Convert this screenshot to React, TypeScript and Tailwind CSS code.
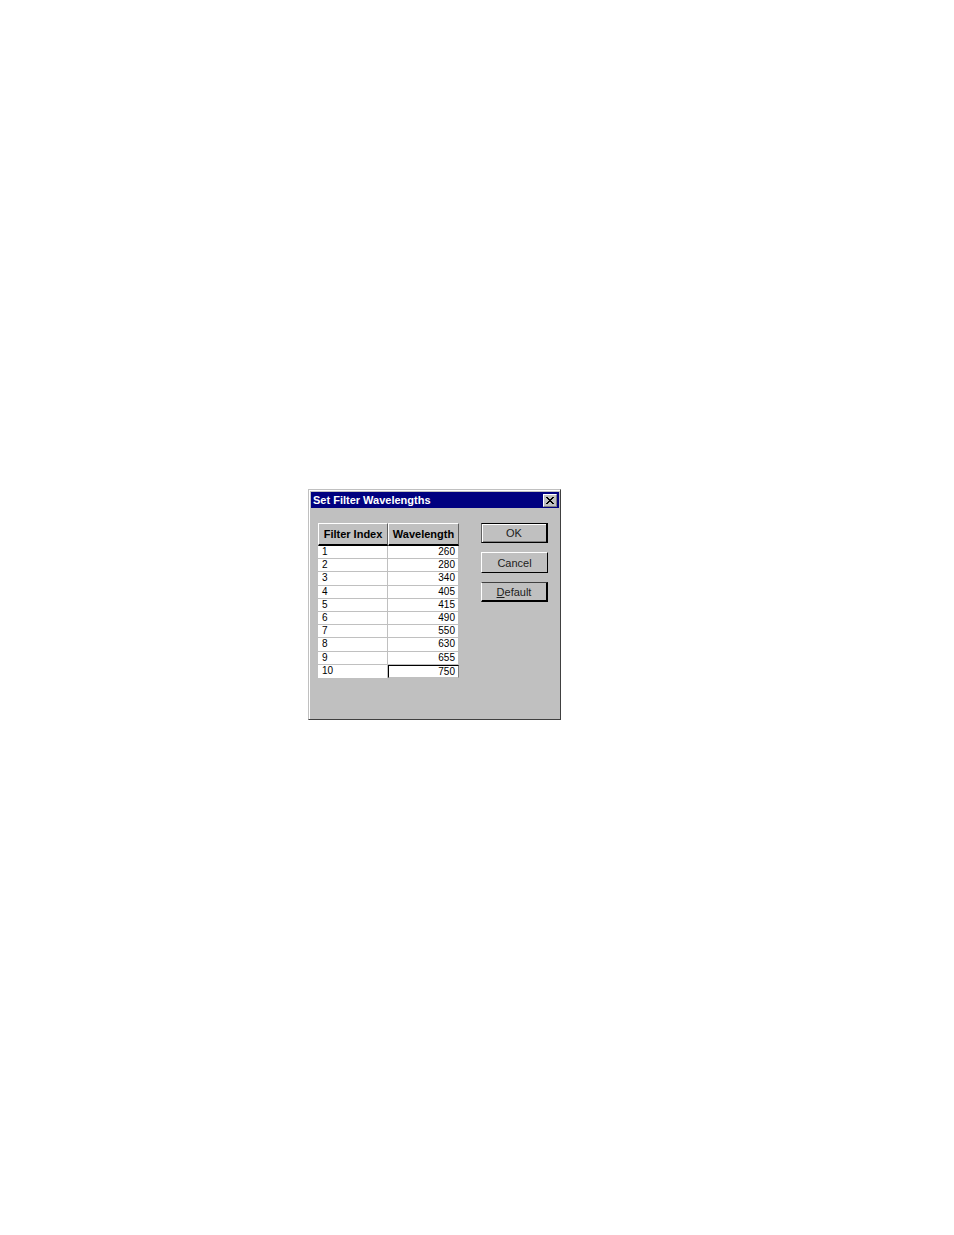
import React from 'react';

const filters = [260, 280, 340, 405, 415, 490, 550, 630, 655, 750];

const buttonBase =
  'w-full border-r-black border-b-black bg-[#c0c0c0] text-center text-[11px] leading-[16px] text-[#202020]';

const headerCell =
  'h-[23px] border-t border-l border-r border-b-2 border-t-white border-l-white border-r-[#606060] border-b-black bg-[#c0c0c0] p-0 text-center text-[11px] leading-[18px] font-bold';

export default function App() {
  return (
    <main className="min-h-screen bg-white pt-[489px] pl-[308px] font-['Liberation_Sans',Arial,sans-serif] text-black">
      <section
        role="dialog"
        aria-labelledby="dialog-title"
        className="w-[253px] border border-t-[#c0c0c0] border-l-[#c0c0c0] border-r-[#404040] border-b-[#404040] bg-[#c0c0c0]"
      >
        <div className="border-t border-l border-white px-px pt-px pb-[41px]">
          {/* Title bar */}
          <header className="flex h-[16px] items-center justify-between bg-[#000080] pr-[2px] pl-[2px]">
            <h1 id="dialog-title" className="text-[11px] leading-[16px] font-bold whitespace-nowrap text-white">
              Set Filter Wavelengths
            </h1>
            <button
              type="button"
              aria-label="Close"
              className="flex h-[13px] w-[14px] items-center justify-center border border-t-white border-l-white border-r-[#808080] border-b-[#808080] bg-[#c0c0c0]"
            >
              <svg width="8" height="7" viewBox="0 0 8 7" fill="black" shapeRendering="crispEdges" aria-hidden="true">
                <path d="M0 0h2v1h1v1h2v-1h1v-1h2v1h-1v1h-1v1h-1v1h1v1h1v1h1v1h-2v-1h-1v-1h-2v1h-1v1h-2v-1h1v-1h1v-1h1v-1h-1v-1h-1v-1h-1z" />
              </svg>
            </button>
          </header>

          <div className="flex items-start justify-between pt-[15px] pr-[11px] pl-[7px]">
            {/* Wavelength grid */}
            <table className="h-[155px] w-[141px] table-fixed border-separate border-spacing-0 bg-white">
              <thead>
                <tr>
                  <th scope="col" className={`${headerCell} w-[70px]`}>
                    Filter Index
                  </th>
                  <th scope="col" className={headerCell}>
                    Wavelength
                  </th>
                </tr>
              </thead>
              <tbody>
                {filters.map((value, i) => {
                  const active = i === filters.length - 1;
                  return (
                    <tr key={value}>
                      <td
                        className={
                          active
                            ? 'border-r border-[#c0c0c0] p-0 pl-[4px] text-[10px] leading-[12px]'
                            : 'border-r border-b border-[#c0c0c0] p-0 pl-[4px] text-[10px] leading-[12px]'
                        }
                      >
                        {i + 1}
                      </td>
                      <td
                        className={
                          active
                            ? 'border border-t-black border-l-black border-r-[#808080] border-b-[#c0c0c0] p-0 pr-[3px] text-right text-[10px] leading-[11px]'
                            : 'border-r border-b border-[#c0c0c0] p-0 pr-[3px] text-right text-[10px] leading-[12px]'
                        }
                      >
                        {value}
                      </td>
                    </tr>
                  );
                })}
              </tbody>
            </table>

            {/* Buttons */}
            <div className="flex w-[67px] flex-col gap-[9px]">
              <button
                type="button"
                className={`${buttonBase} h-[20px] border-t border-r-2 border-b border-l border-t-black border-l-[#606060] shadow-[inset_1px_1px_0_#fff,inset_0_-1px_0_#808080]`}
              >
                OK
              </button>
              <button type="button" className={`${buttonBase} h-[21px] border border-t-white border-l-white`}>
                Cancel
              </button>
              <button
                type="button"
                className={`${buttonBase} h-[20px] border-t border-r-2 border-b-2 border-l border-t-[#404040] border-l-white`}
              >
                <span className="underline">D</span>efault
              </button>
            </div>
          </div>
        </div>
      </section>
    </main>
  );
}
